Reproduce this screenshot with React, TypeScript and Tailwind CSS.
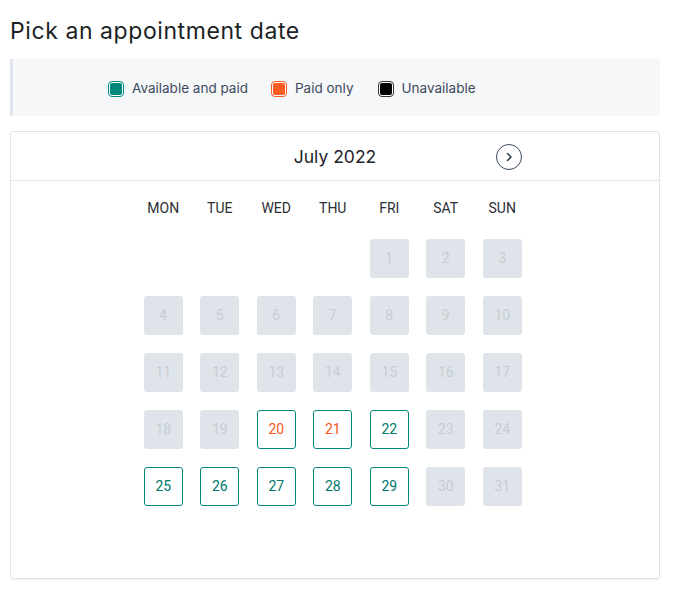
import React from "react";

type Kind = "none" | "off" | "avail" | "paid";

const days: { n?: number; k: Kind }[] = [];
for (let i = 0; i < 4; i++) days.push({ k: "none" });
for (let d = 1; d <= 31; d++) {
  let k: Kind = "off";
  if (d === 20 || d === 21) k = "paid";
  else if (d === 22 || (d >= 25 && d <= 29)) k = "avail";
  days.push({ n: d, k });
}

const weekdays = ["MON", "TUE", "WED", "THU", "FRI", "SAT", "SUN"];

function Swatch({ border, fill }: { border: string; fill: string }) {
  return (
    <span
      className="inline-flex h-[16px] w-[16px] items-center justify-center rounded-[4px] border bg-white p-[1px]"
      style={{ borderColor: border }}
    >
      <span className="block h-full w-full rounded-[2px]" style={{ background: fill }} />
    </span>
  );
}

export default function App() {
  return (
    <div className="min-h-[596px] w-[674px] bg-white" style={{ fontFamily: "Inter, 'Noto Sans', sans-serif" }}>
      <div className="pl-[10px] pr-[14px]">
        <h1 className="pt-[16px] text-[23px] leading-[30px] text-[#1c1f24] tracking-[0.58px]">Pick an appointment date</h1>
        <div className="mt-[13px] flex h-[57px] items-center border-l-[3px] border-[#dfe5ec] bg-[#f6f7f9] pl-[95px] pt-[2px] text-[13.5px] text-[#3c4a5b]">
          <div className="flex items-center gap-[8px]">
            <Swatch border="#00897b" fill="#00897b" />
            <span>Available and paid</span>
          </div>
          <div className="ml-[23px] flex items-center gap-[8px]">
            <Swatch border="#ff5a1f" fill="#ff5a1f" />
            <span>Paid only</span>
          </div>
          <div className="ml-[24px] flex items-center gap-[8px]">
            <Swatch border="#333333" fill="#000000" />
            <span>Unavailable</span>
          </div>
        </div>
        <div className="mt-[15px] h-[448px] rounded-[3px] border border-[#dfe3e8] shadow-[0_1px_2px_rgba(0,0,0,0.06)]">
          <div className="relative flex h-[49px] items-center justify-center border-b border-[#e1e5ea]">
            <span className="pt-[2px] text-[17.5px] text-[#1f2329]">July 2022</span>
            <span className="absolute left-[485px] top-[12px] flex h-[26px] w-[26px] items-center justify-center rounded-full border-[1.5px] border-[#3b4a5c]">
              <svg width="10" height="10" viewBox="0 0 10 10" fill="none">
                <path d="M3.5 1.5 L7 5 L3.5 8.5" stroke="#24384e" strokeWidth="1.5" strokeLinecap="round" strokeLinejoin="round" />
              </svg>
            </span>
          </div>
          <div
            className="ml-[124px] mt-[19px] grid w-[395px] grid-cols-[repeat(7,56.5px)] gap-y-[18px]"
            style={{ fontFamily: "Roboto, 'Liberation Sans', sans-serif" }}
          >
            {weekdays.map((w) => (
              <div key={w} className="mb-[4px] flex h-[17px] items-center justify-center text-[14px] text-[#2b2f33]">
                {w}
              </div>
            ))}
            {days.map((d, i) => (
              <div key={i} className="flex justify-center">
                {d.k === "none" ? (
                  <div className="h-[39px] w-[39px]" />
                ) : d.k === "off" ? (
                  <div className="flex h-[39px] w-[39px] items-center justify-center rounded-[3px] bg-[#dfe4ea] text-[14px] text-[#c6ccd2]">
                    {d.n}
                  </div>
                ) : (
                  <div
                    className={
                      "flex h-[39px] w-[39px] items-center justify-center rounded-[3px] border border-[#00897b] bg-white text-[14px] " +
                      (d.k === "paid" ? "text-[#f9551c]" : "text-[#00796b]")
                    }
                  >
                    {d.n}
                  </div>
                )}
              </div>
            ))}
          </div>
        </div>
      </div>
    </div>
  );
}
